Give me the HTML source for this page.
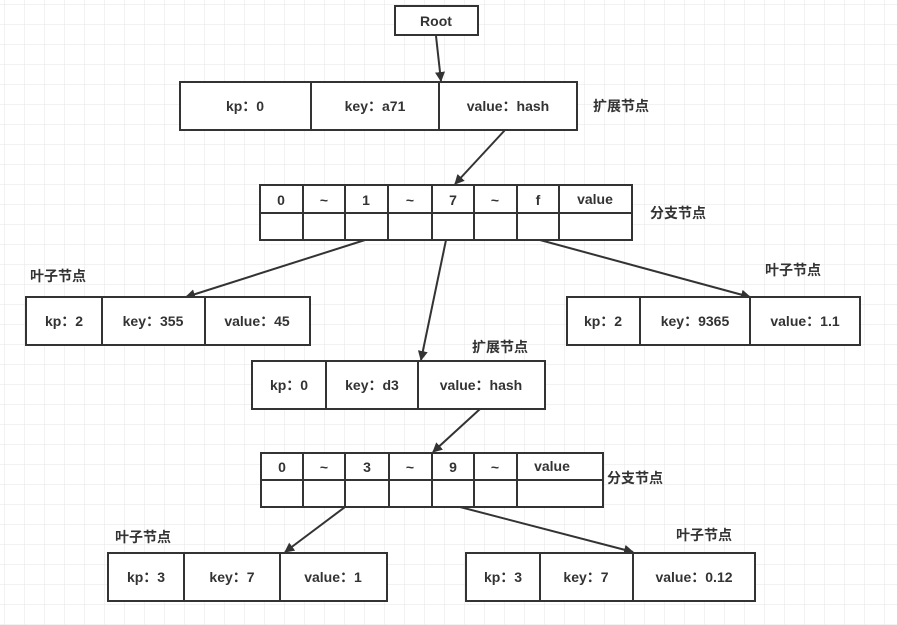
<!DOCTYPE html>
<html><head><meta charset="utf-8"><style>
html,body{margin:0;padding:0;background:#fff}
svg{display:block}
text{font-family:"Liberation Sans","Noto Sans CJK SC",sans-serif;font-size:14px;font-weight:bold;fill:#333;text-anchor:middle;dominant-baseline:central}
.l{text-anchor:start}
rect.n,line.b{stroke:#333;stroke-width:2;fill:#fff}
</style></head><body>
<svg width="897" height="625" viewBox="0 0 897 625" xmlns="http://www.w3.org/2000/svg">
<defs>
<pattern id="g" width="20" height="20" patternUnits="userSpaceOnUse" x="5" y="5">
<path d="M20 0V20M0 20H20" stroke="#e6e6e6" stroke-width="1" fill="none"/>
</pattern>
<marker id="a" markerWidth="10" markerHeight="10" refX="9" refY="5" orient="auto" markerUnits="userSpaceOnUse">
<path d="M0,0 L10,5 L0,10 Z" fill="#333"/>
</marker>
</defs>
<rect x="0" y="0" width="897" height="625" fill="url(#g)"/>
<g stroke="#333" stroke-width="2" marker-end="url(#a)">
<line x1="436" y1="36" x2="441" y2="81"/>
<line x1="505" y1="130" x2="455" y2="184"/>
<line x1="365" y1="240" x2="186" y2="297"/>
<line x1="446" y1="240" x2="421" y2="360"/>
<line x1="540" y1="240" x2="750" y2="297"/>
<line x1="480" y1="409" x2="433" y2="452"/>
<line x1="345" y1="507" x2="285" y2="552"/>
<line x1="460" y1="507" x2="633" y2="552"/>
</g>
<rect class="n" x="395" y="6" width="83" height="29"/><text x="436" y="21">Root</text>

<rect class="n" x="180" y="82" width="397" height="48"/>
<line class="b" x1="311" y1="82" x2="311" y2="130"/><line class="b" x1="439" y1="82" x2="439" y2="130"/>
<text x="245" y="106">kp：0</text><text x="375" y="106">key：a71</text><text x="508" y="106">value：hash</text>
<text class="l" x="593" y="106">扩展节点</text>

<rect class="n" x="260" y="185" width="372" height="55"/>
<line class="b" x1="260" y1="213" x2="632" y2="213"/>
<line class="b" x1="303" y1="185" x2="303" y2="240"/><line class="b" x1="345" y1="185" x2="345" y2="240"/>
<line class="b" x1="388" y1="185" x2="388" y2="240"/><line class="b" x1="432" y1="185" x2="432" y2="240"/>
<line class="b" x1="474" y1="185" x2="474" y2="240"/><line class="b" x1="517" y1="185" x2="517" y2="240"/>
<line class="b" x1="559" y1="185" x2="559" y2="240"/>
<text x="281" y="200">0</text><text x="324" y="200">~</text><text x="366" y="200">1</text><text x="410" y="200">~</text><text x="453" y="200">7</text><text x="495" y="200">~</text><text x="538" y="200">f</text><text x="595" y="199">value</text>
<text class="l" x="650" y="213">分支节点</text>

<text class="l" x="30" y="276">叶子节点</text>
<rect class="n" x="26" y="297" width="284" height="48"/>
<line class="b" x1="102" y1="297" x2="102" y2="345"/><line class="b" x1="205" y1="297" x2="205" y2="345"/>
<text x="64" y="321">kp：2</text><text x="153" y="321">key：355</text><text x="257" y="321">value：45</text>

<text class="l" x="765" y="270">叶子节点</text>
<rect class="n" x="567" y="297" width="293" height="48"/>
<line class="b" x1="640" y1="297" x2="640" y2="345"/><line class="b" x1="750" y1="297" x2="750" y2="345"/>
<text x="603" y="321">kp：2</text><text x="695" y="321">key：9365</text><text x="805" y="321">value：1.1</text>

<text class="l" x="472" y="347">扩展节点</text>
<rect class="n" x="252" y="361" width="293" height="48"/>
<line class="b" x1="326" y1="361" x2="326" y2="409"/><line class="b" x1="418" y1="361" x2="418" y2="409"/>
<text x="289" y="385">kp：0</text><text x="372" y="385">key：d3</text><text x="481" y="385">value：hash</text>

<rect class="n" x="261" y="453" width="342" height="54"/>
<line class="b" x1="261" y1="480" x2="603" y2="480"/>
<line class="b" x1="303" y1="453" x2="303" y2="507"/><line class="b" x1="345" y1="453" x2="345" y2="507"/>
<line class="b" x1="389" y1="453" x2="389" y2="507"/><line class="b" x1="432" y1="453" x2="432" y2="507"/>
<line class="b" x1="474" y1="453" x2="474" y2="507"/><line class="b" x1="517" y1="453" x2="517" y2="507"/>
<text x="282" y="467">0</text><text x="324" y="467">~</text><text x="367" y="467">3</text><text x="410" y="467">~</text><text x="453" y="467">9</text><text x="495" y="467">~</text><text x="552" y="466">value</text>
<text class="l" x="607" y="478">分支节点</text>

<text class="l" x="115" y="537">叶子节点</text>
<rect class="n" x="108" y="553" width="279" height="48"/>
<line class="b" x1="184" y1="553" x2="184" y2="601"/><line class="b" x1="280" y1="553" x2="280" y2="601"/>
<text x="146" y="577">kp：3</text><text x="232" y="577">key：7</text><text x="333" y="577">value：1</text>

<text class="l" x="676" y="535">叶子节点</text>
<rect class="n" x="466" y="553" width="289" height="48"/>
<line class="b" x1="540" y1="553" x2="540" y2="601"/><line class="b" x1="633" y1="553" x2="633" y2="601"/>
<text x="503" y="577">kp：3</text><text x="586" y="577">key：7</text><text x="694" y="577">value：0.12</text>
</svg>
</body></html>
